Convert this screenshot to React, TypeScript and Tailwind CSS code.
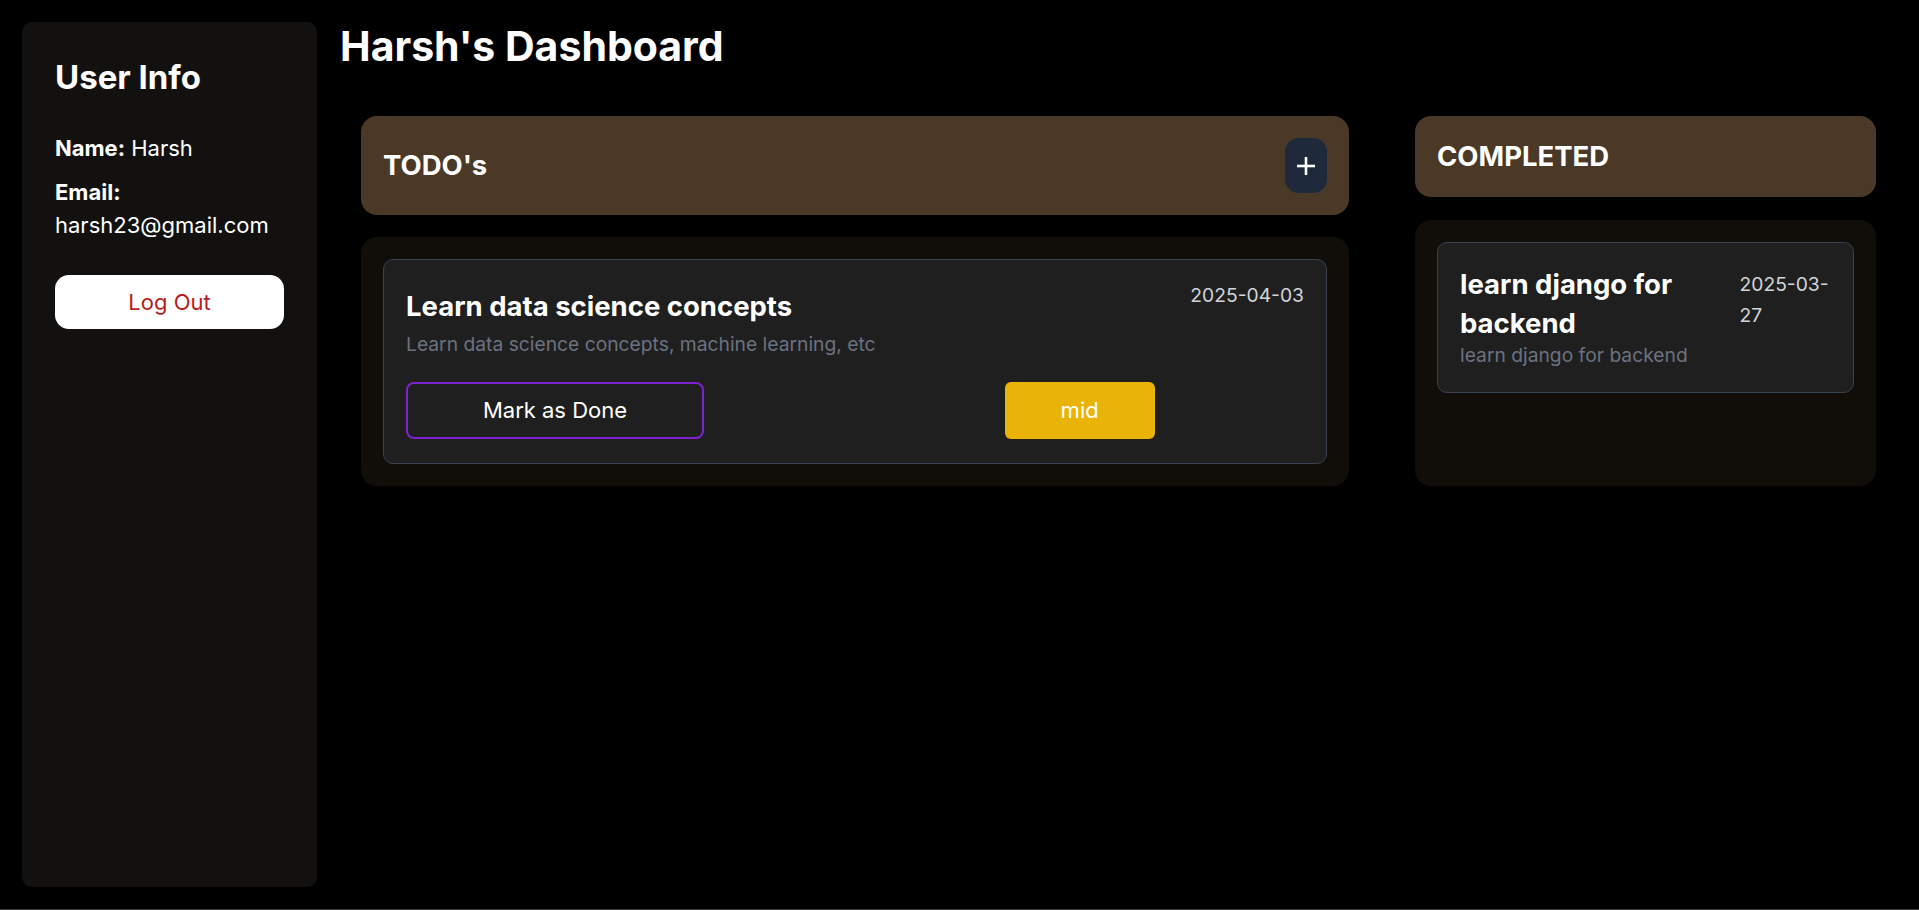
import React from "react";

function PlusIcon() {
  return (
    <svg width="20" height="20" viewBox="0 0 20 20" fill="none" stroke="white" strokeWidth="2.6" strokeLinecap="butt">
      <line x1="10" y1="1" x2="10" y2="19" />
      <line x1="1" y1="10" x2="19" y2="10" />
    </svg>
  );
}

export default function App() {
  return (
    <div
      className="h-screen w-full bg-black border-b border-[#3f3f3f] text-white flex gap-[23px] p-[22px] overflow-hidden"
      style={{ fontFamily: "Inter, 'Noto Sans', sans-serif" }}
    >
      {/* Sidebar */}
      <aside className="w-[295px] h-[865px] shrink-0 bg-[#121110] rounded-[10px] px-[33px] pt-[33px] flex flex-col">
        <h2 className="text-[33px] leading-[44px] font-bold">User Info</h2>
        <p className="mt-[33px] text-[22px] leading-[33px]">
          <span className="font-bold">Name:</span> Harsh
        </p>
        <p className="mt-[11px] text-[22px] leading-[33px]">
          <span className="font-bold">Email:</span> harsh23@gmail.com
        </p>
        <button className="mt-[33px] h-[54px] w-full bg-white rounded-[14px] text-[#b91c1c] text-[22px]">
          Log Out
        </button>
      </aside>

      {/* Main */}
      <main className="flex-1 flex flex-col">
        <h1 className="text-[41px] leading-[48px] font-bold">Harsh&apos;s Dashboard</h1>
        <div className="mt-[46px] pl-[21px] pr-[21px] grid grid-cols-3 gap-[66px] items-stretch">
          {/* TODO column */}
          <section className="col-span-2 flex flex-col gap-[22px]">
            <div className="bg-[#4a3926] rounded-[16px] p-[22px] flex items-center justify-between">
              <h3 className="text-[27.5px] leading-[37px] font-bold">TODO&apos;s</h3>
              <button className="w-[42px] h-[55px] rounded-[14px] bg-[#1e293b] flex items-center justify-center">
                <PlusIcon />
              </button>
            </div>
            <div className="flex-1 bg-[#110d08] rounded-[16px] p-[22px]">
              <div className="bg-[#1f1f1f] border border-[#3a4150] rounded-[10px] px-[22px] pt-[22px] pb-[24px]">
                <div className="flex justify-between items-start">
                  <h4 className="mt-[5px] text-[27.5px] leading-[39px] font-bold">Learn data science concepts</h4>
                  <span className="text-[19.25px] leading-[26px] text-[#d1d5db]">2025-04-03</span>
                </div>
                <p className="mt-[3px] text-[19.25px] leading-[30px] text-[#6b7280]">
                  Learn data science concepts, machine learning, etc
                </p>
                <div className="mt-[23px] grid grid-cols-3">
                  <button className="h-[57px] w-[298px] border-2 border-[#7e22ce] rounded-[8px] text-[22px] text-white">
                    Mark as Done
                  </button>
                  <div />
                  <div>
                    <span className="h-[57px] w-[150px] bg-[#eab308] rounded-[6px] text-[22px] text-white flex items-center justify-center">
                      mid
                    </span>
                  </div>
                </div>
              </div>
            </div>
          </section>

          {/* Completed column */}
          <section className="flex flex-col gap-[23px]">
            <div className="bg-[#4a3926] rounded-[16px] p-[22px]">
              <h3 className="text-[27.5px] leading-[37px] font-bold">COMPLETED</h3>
            </div>
            <div className="flex-1 bg-[#110d08] rounded-[16px] p-[22px]">
              <div className="bg-[#1f1f1f] border border-[#3a4150] rounded-[10px] px-[22px] pt-[22px] pb-[25px]">
                <div className="flex justify-between items-start gap-[4px]">
                  <h4 className="text-[27.5px] leading-[39px] font-bold">learn django for backend</h4>
                  <span className="mt-[4px] text-[19.25px] leading-[31px] text-[#d1d5db]">2025-03-27</span>
                </div>
                <p className="text-[19.25px] leading-[24px] text-[#6b7280]">learn django for backend</p>
              </div>
            </div>
          </section>
        </div>
      </main>
    </div>
  );
}
